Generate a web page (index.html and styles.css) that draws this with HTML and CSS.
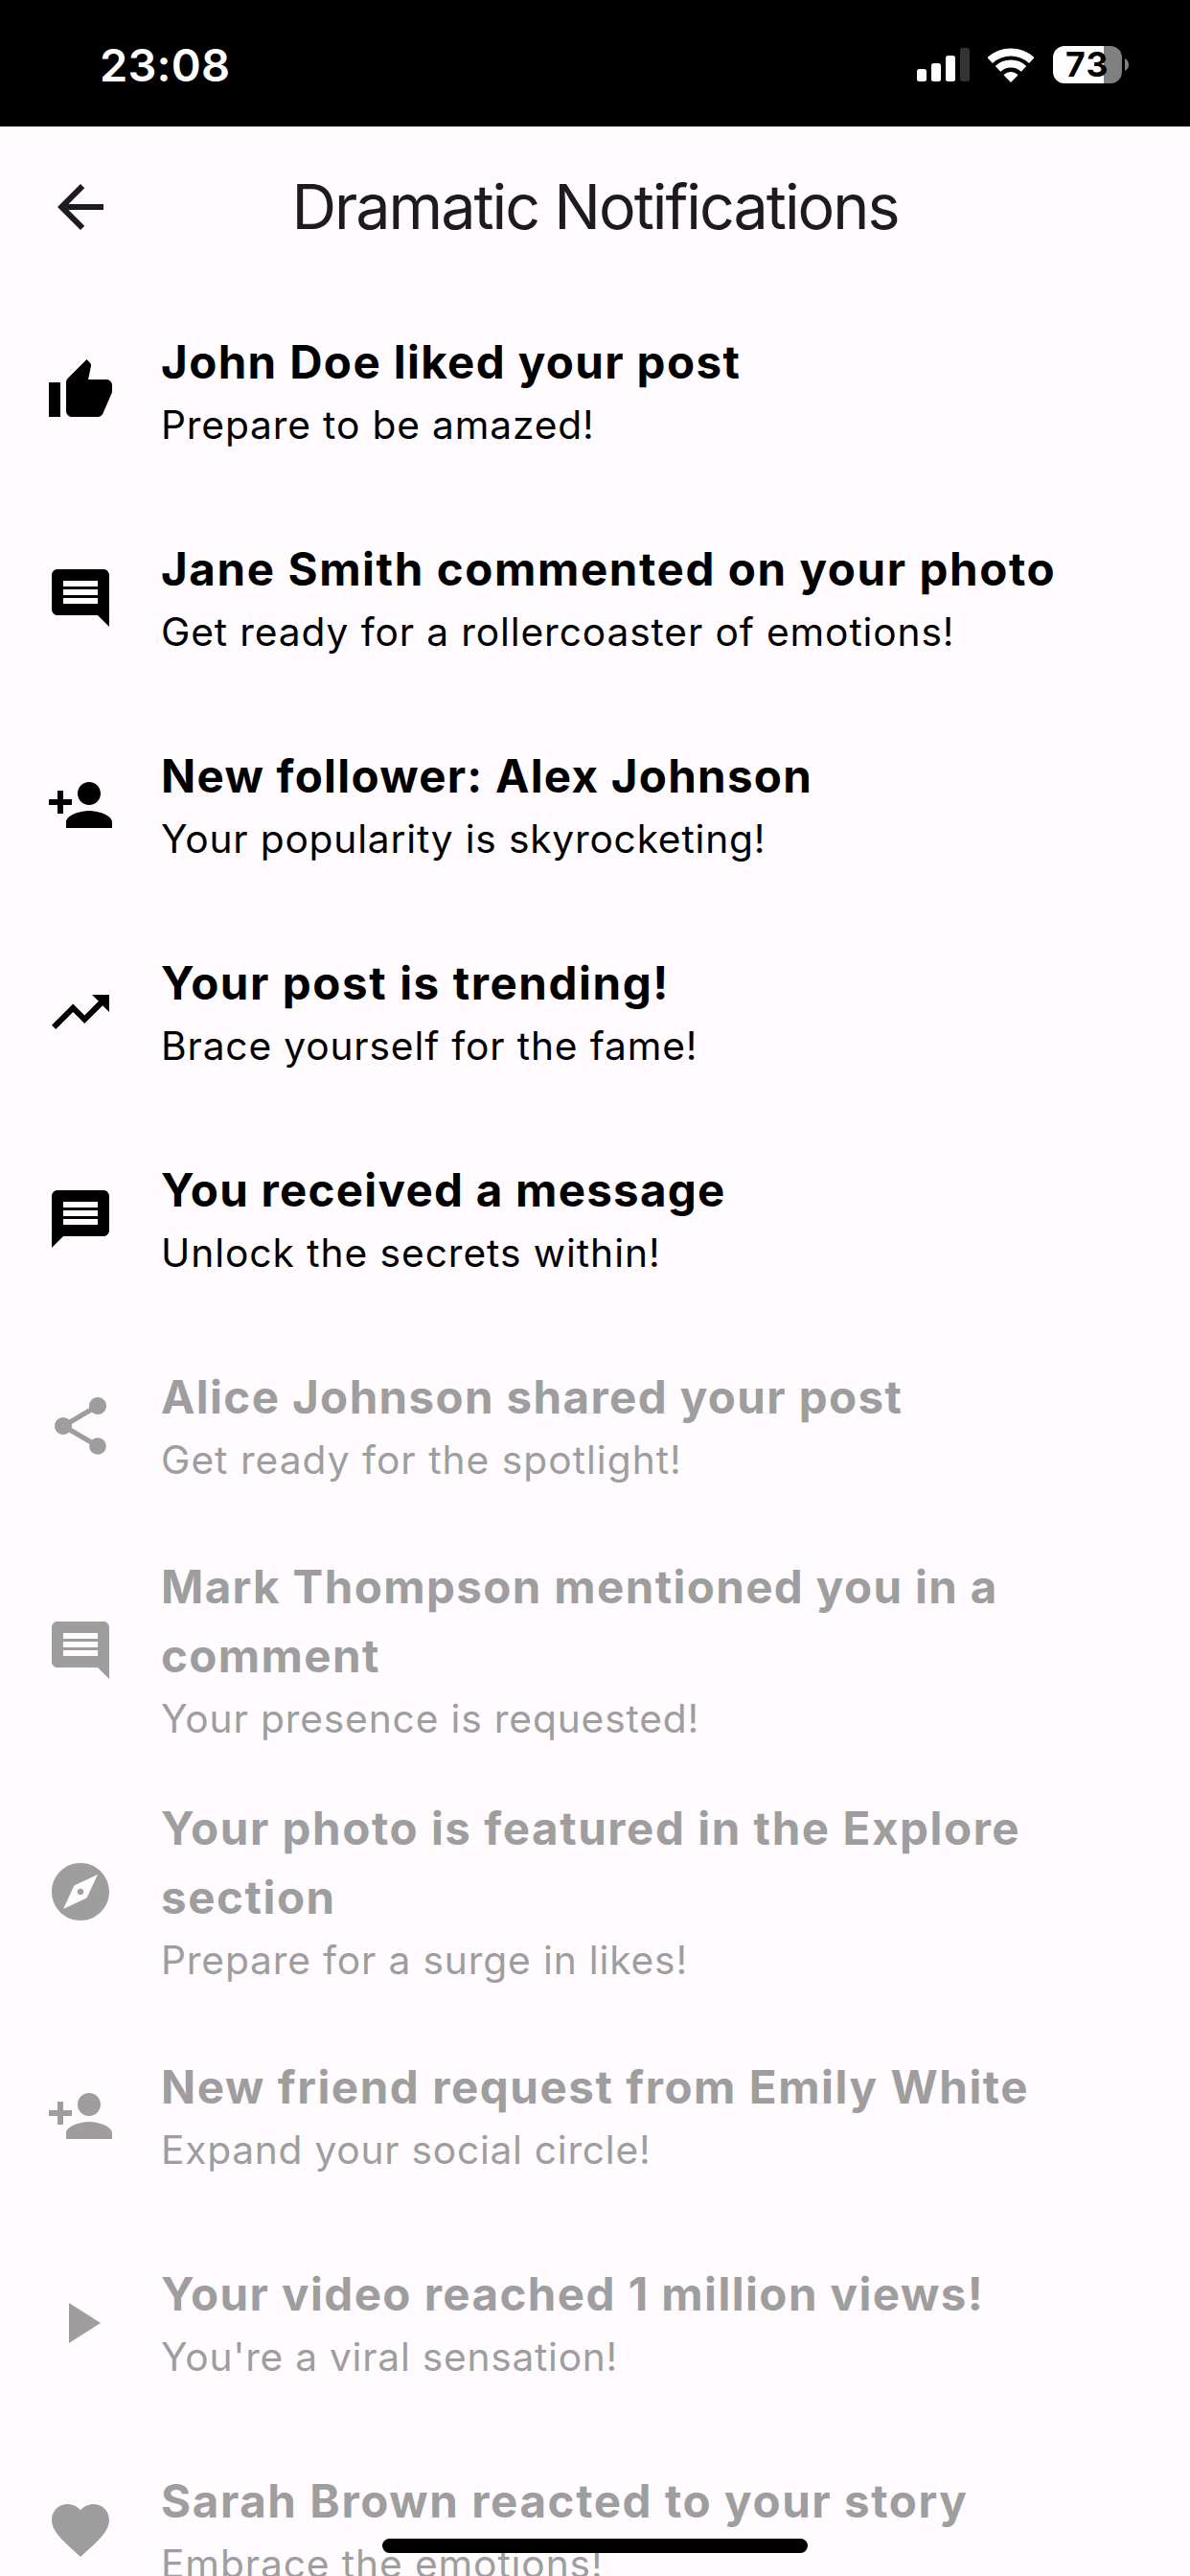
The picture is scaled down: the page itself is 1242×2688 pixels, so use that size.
FILE: index.html
```
<!DOCTYPE html>
<html lang="en">
<head>
<meta charset="utf-8">
<title>Dramatic Notifications</title>
<link rel="stylesheet" href="styles.css">
</head>
<body>
<div class="screen">
  <div class="status-bar">
    <span class="time">23:08</span>
    <div class="indicators">
      <svg class="signal" viewBox="0 0 55 35"><g fill="#fff"><rect x="0" y="22" width="10" height="13" rx="2.5"/><rect x="15" y="16" width="10" height="19" rx="2.5"/><rect x="30" y="8" width="10" height="27" rx="2.5"/></g><rect x="45" y="0" width="10" height="35" rx="2.5" fill="#333"/></svg>
      <svg class="wifi" viewBox="0 0 48 36"><g fill="none" stroke="#fff" stroke-width="8"><path d="M2.2 13A32 32 0 0 1 45.8 13"/><path d="M10.5 21.8A19.7 19.7 0 0 1 37.5 21.8"/></g><path d="M24 35L17.4 28.2A10 10 0 0 1 30.6 28.2Z" fill="#fff" stroke="#fff" stroke-width="1.4" stroke-linejoin="round"/></svg>
      <div class="battery">
        <span class="battery-body">73</span>
        <svg class="battery-cap" viewBox="0 0 4 13"><path d="M0 0Q4 2 4 6.5T0 13Z" fill="#808080"/></svg>
      </div>
    </div>
  </div>

  <header class="app-bar">
    <svg class="icon" viewBox="0 0 24 24"><path d="M20 11H7.83l5.59-5.59L12 4l-8 8 8 8 1.41-1.41L7.83 13H20v-2z"/></svg>
    <h1 class="app-title">Dramatic Notifications</h1>
  </header>

  <ul class="list">
    <li class="item">
      <svg class="icon" viewBox="0 0 24 24"><path d="M1 21h4V9H1v12zm22-11c0-1.1-.9-2-2-2h-6.31l.95-4.57.03-.32c0-.41-.17-.79-.44-1.06L14.17 1 7.59 7.59C7.22 7.95 7 8.45 7 9v10c0 1.1.9 2 2 2h9c.83 0 1.54-.5 1.84-1.22l3.02-7.05c.09-.23.14-.47.14-.73v-2z"/></svg>
      <div class="text"><div class="title">John Doe liked your post</div><div class="subtitle">Prepare to be amazed!</div></div>
    </li>
    <li class="item">
      <svg class="icon" viewBox="0 0 24 24"><path d="M21.99 4c0-1.1-.89-2-1.99-2H4c-1.1 0-2 .9-2 2v12c0 1.1.9 2 2 2h14l4 4-.01-18zM18 14H6v-2h12v2zm0-3H6V9h12v2zm0-3H6V6h12v2z"/></svg>
      <div class="text"><div class="title">Jane Smith commented on your photo</div><div class="subtitle">Get ready for a rollercoaster of emotions!</div></div>
    </li>
    <li class="item">
      <svg class="icon" viewBox="0 0 24 24"><path d="M15 12c2.21 0 4-1.79 4-4s-1.79-4-4-4-4 1.790-4 4 1.790 4 4 4zm-9-2V7H4v3H1v2h3v3h2v-3h3v-2H6zm9 4c-2.670 0-8 1.340-8 4v2h16v-2c0-2.660-5.330-4-8-4z"/></svg>
      <div class="text"><div class="title">New follower: Alex Johnson</div><div class="subtitle">Your popularity is skyrocketing!</div></div>
    </li>
    <li class="item">
      <svg class="icon" viewBox="0 0 24 24"><path d="M16 6l2.290 2.290-4.880 4.880-4-4L2 16.590 3.410 18l6-6 4 4 6.300-6.290L22 12V6z"/></svg>
      <div class="text"><div class="title">Your post is trending!</div><div class="subtitle">Brace yourself for the fame!</div></div>
    </li>
    <li class="item">
      <svg class="icon" viewBox="0 0 24 24"><path d="M20 2H4c-1.100 0-1.990.9-1.990 2L2 22l4-4h14c1.100 0 2-.9 2-2V4c0-1.100-.9-2-2-2zm-2 12H6v-2h12v2zm0-3H6V9h12v2zm0-3H6V6h12v2z"/></svg>
      <div class="text"><div class="title">You received a message</div><div class="subtitle">Unlock the secrets within!</div></div>
    </li>
    <li class="item read">
      <svg class="icon" viewBox="0 0 24 24"><path d="M18 16.080c-.76 0-1.440.3-1.960.77L8.910 12.700c.05-.23.09-.46.09-.7s-.04-.47-.09-.7l7.050-4.110c.54.5 1.250.81 2.040.81 1.660 0 3-1.340 3-3s-1.340-3-3-3-3 1.340-3 3c0 .24.04.47.09.7L8.040 9.810C7.500 9.310 6.790 9 6 9c-1.660 0-3 1.340-3 3s1.340 3 3 3c.79 0 1.500-.31 2.040-.81l7.120 4.160c-.05.21-.08.43-.08.65 0 1.610 1.310 2.920 2.920 2.920s2.920-1.310 2.920-2.920-1.310-2.920-2.920-2.920z"/></svg>
      <div class="text"><div class="title">Alice Johnson shared your post</div><div class="subtitle">Get ready for the spotlight!</div></div>
    </li>
    <li class="item read tall">
      <svg class="icon" viewBox="0 0 24 24"><path d="M21.990 4c0-1.100-.89-2-1.990-2H4c-1.100 0-2 .9-2 2v12c0 1.100.9 2 2 2h14l4 4-.01-18zM18 14H6v-2h12v2zm0-3H6V9h12v2zm0-3H6V6h12v2z"/></svg>
      <div class="text"><div class="title">Mark Thompson mentioned you in a comment</div><div class="subtitle">Your presence is requested!</div></div>
    </li>
    <li class="item read tall">
      <svg class="icon" viewBox="0 0 24 24"><path d="M12 10.900c-.61 0-1.100.49-1.100 1.100s.49 1.100 1.100 1.100c.61 0 1.100-.49 1.100-1.100s-.49-1.100-1.100-1.100zM12 2C6.480 2 2 6.480 2 12s4.480 10 10 10 10-4.480 10-10S17.520 2 12 2zm2.190 12.190L6 18l3.810-8.190L18 6l-3.810 8.190z"/></svg>
      <div class="text"><div class="title">Your photo is featured in the Explore section</div><div class="subtitle">Prepare for a surge in likes!</div></div>
    </li>
    <li class="item read">
      <svg class="icon" viewBox="0 0 24 24"><path d="M15 12c2.210 0 4-1.790 4-4s-1.790-4-4-4-4 1.790-4 4 1.790 4 4 4zm-9-2V7H4v3H1v2h3v3h2v-3h3v-2H6zm9 4c-2.670 0-8 1.340-8 4v2h16v-2c0-2.660-5.330-4-8-4z"/></svg>
      <div class="text"><div class="title">New friend request from Emily White</div><div class="subtitle">Expand your social circle!</div></div>
    </li>
    <li class="item read">
      <svg class="icon" viewBox="0 0 24 24"><path d="M8 5v14l11-7z"/></svg>
      <div class="text"><div class="title">Your video reached 1 million views!</div><div class="subtitle">You're a viral sensation!</div></div>
    </li>
    <li class="item read">
      <svg class="icon" viewBox="0 0 24 24"><path d="M12 21.350l-1.450-1.320C5.400 15.360 2 12.280 2 8.500 2 5.420 4.420 3 7.500 3c1.740 0 3.410.81 4.500 2.090C13.090 3.810 14.760 3 16.500 3 19.580 3 22 5.420 22 8.500c0 3.780-3.400 6.860-8.550 11.540L12 21.350z"/></svg>
      <div class="text"><div class="title">Sarah Brown reacted to your story</div><div class="subtitle">Embrace the emotions!</div></div>
    </li>
  </ul>
  <div class="home-indicator"></div>
</div>
</body>
</html>
```
FILE: styles.css
```
* { box-sizing: border-box; }

body {
  margin: 0;
  background: #fffbff;
  font-family: Inter, "Liberation Sans", sans-serif;
}

.screen {
  position: relative;
  width: 1242px;
  height: 2688px;
  overflow: hidden;
  background: #fffbff;
}

.status-bar {
  display: flex;
  align-items: center;
  justify-content: space-between;
  height: 132px;
  padding: 3px 64px 0 104px;
  background: #000;
  color: #fff;
}

.time {
  font-size: 47px;
  font-weight: 600;
  line-height: 56px;
  letter-spacing: 0.2px;
}

.indicators { display: flex; align-items: center; }
.signal { width: 55px; height: 35px; }
.wifi { width: 48px; height: 36px; margin: 0 20px 0 19px; }
.battery { display: flex; align-items: center; gap: 3px; }

.battery-body {
  width: 72px;
  height: 39px;
  padding-left: 13px;
  border-radius: 12px;
  background: linear-gradient(to right, #fff 53px, #808080 53px);
  color: #000;
  font-size: 35.7px;
  font-weight: 700;
  line-height: 39px;
  letter-spacing: 1.3px;
}

.battery-cap { width: 4px; height: 13px; }

.icon { flex: none; width: 72px; height: 72px; fill: currentColor; }

.app-bar {
  display: grid;
  grid-template-columns: 72px 1fr 72px;
  align-items: center;
  height: 168px;
  padding: 0 48px;
  color: #1c1b1f;
}

.app-title {
  margin: 0;
  font-size: 64.6px;
  font-weight: 400;
  line-height: 84px;
  letter-spacing: -2px;
  text-align: center;
  white-space: nowrap;
}

.list { margin: 0; padding: 0; list-style: none; }

.item {
  display: flex;
  align-items: center;
  gap: 48px;
  height: 216px;
  padding: 0 72px 0 48px;
  color: #000;
}

.item.tall { height: 252px; }
.item.read { color: #9e9e9e; }

.text { flex: 1; }

.title {
  font-size: 47.5px;
  font-weight: 700;
  line-height: 72px;
  letter-spacing: var(--title-tracking, 1.38px);
}

.subtitle {
  font-size: 40.7px;
  line-height: 60px;
  letter-spacing: var(--subtitle-tracking, 0.85px);
}

.item:nth-child(2) { --title-tracking: 1.6px; --subtitle-tracking: 0.88px; }
.item:nth-child(3) { --title-tracking: 1.27px; --subtitle-tracking: 0.8px; }
.item:nth-child(4) { --title-tracking: 1.6px; }
.item:nth-child(5) { --title-tracking: 1.27px; --subtitle-tracking: 0.95px; }
.item:nth-child(6) { --subtitle-tracking: 1.02px; }
.item:nth-child(8) { --title-tracking: 1.56px; }
.item:nth-child(9) { --title-tracking: 1.56px; --subtitle-tracking: 0.75px; }
.item:nth-child(10) { --title-tracking: 1.44px; --subtitle-tracking: 0.75px; }
.item:nth-child(11) { --title-tracking: 1.6px; --subtitle-tracking: 0.9px; }

.home-indicator {
  position: absolute;
  left: 399px;
  bottom: 24px;
  width: 444px;
  height: 15px;
  border-radius: 8px;
  background: #000;
}
```
